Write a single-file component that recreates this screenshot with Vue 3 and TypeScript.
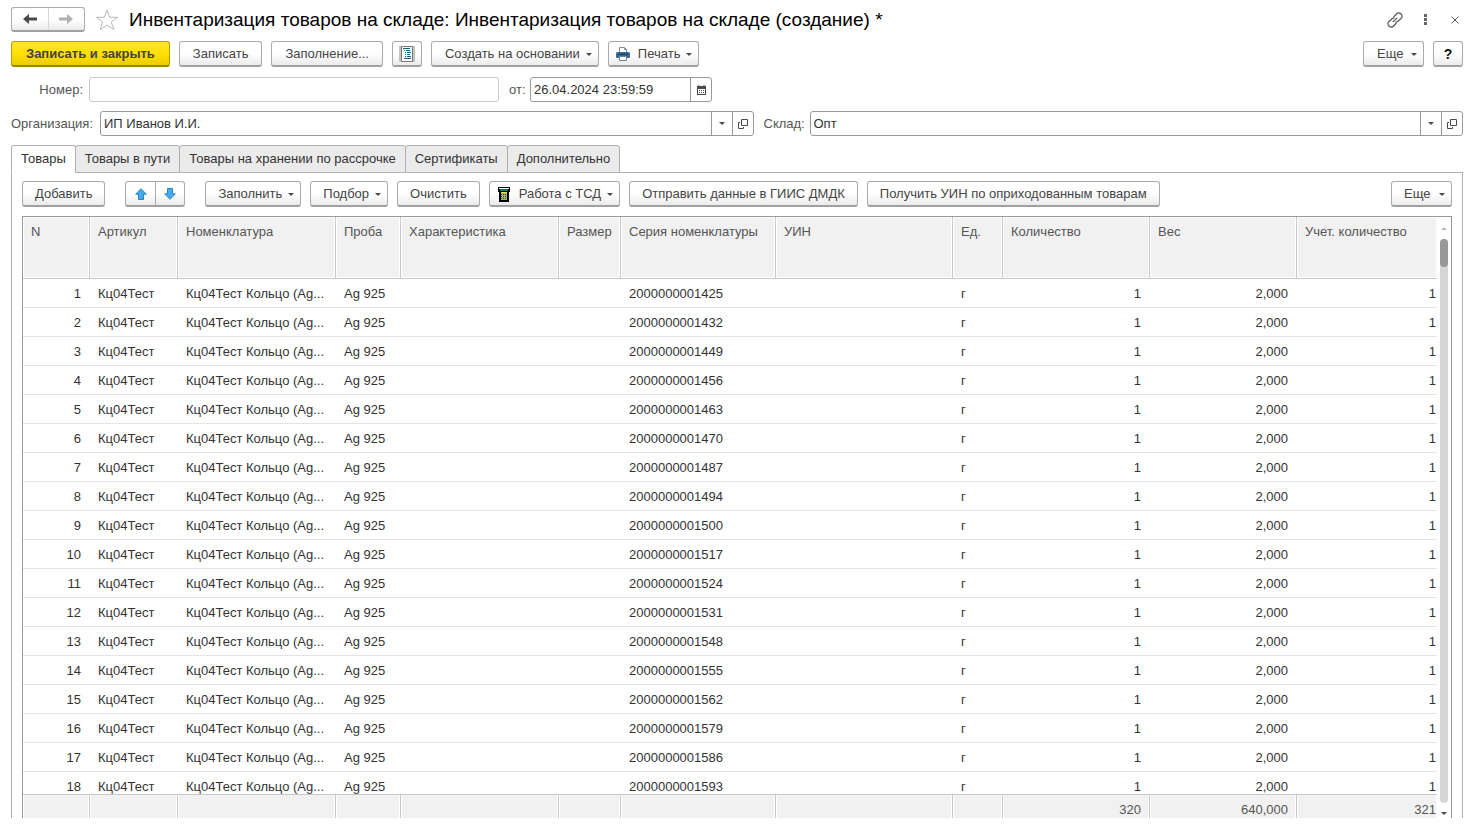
<script setup lang="ts">
import { ref } from 'vue'

interface Column {
  key: string
  title: string
  width: number | null
  numeric?: boolean
  total?: string
}

const columns: Column[] = [
  { key: 'n', title: 'N', width: 67, numeric: true },
  { key: 'article', title: 'Артикул', width: 88 },
  { key: 'item', title: 'Номенклатура', width: 158 },
  { key: 'fineness', title: 'Проба', width: 65 },
  { key: 'feature', title: 'Характеристика', width: 158 },
  { key: 'size', title: 'Размер', width: 62 },
  { key: 'series', title: 'Серия номенклатуры', width: 155 },
  { key: 'uin', title: 'УИН', width: 177 },
  { key: 'unit', title: 'Ед.', width: 50 },
  { key: 'qty', title: 'Количество', width: 147, numeric: true, total: '320' },
  { key: 'weight', title: 'Вес', width: 147, numeric: true, total: '640,000' },
  { key: 'accQty', title: 'Учет. количество', width: null, numeric: true, total: '321' },
]

const seriesEndings = [
  '1425', '1432', '1449', '1456', '1463', '1470', '1487', '1494', '1500',
  '1517', '1524', '1531', '1548', '1555', '1562', '1579', '1586', '1593',
]

const rows: Record<string, string>[] = seriesEndings.map((ending, i) => ({
  n: String(i + 1),
  article: 'Кц04Тест',
  item: 'Кц04Тест Кольцо (Ag...',
  fineness: 'Ag 925',
  series: '200000000' + ending,
  unit: 'г',
  qty: '1',
  weight: '2,000',
  accQty: '1',
}))

const tabs = ['Товары', 'Товары в пути', 'Товары на хранении по рассрочке', 'Сертификаты', 'Дополнительно']
const activeTab = ref(0)
const docNumber = ref('')
const docDate = ref('26.04.2024 23:59:59')
const organization = ref('ИП Иванов И.И.')
const warehouse = ref('Опт')
</script>

<template>
  <main class="form">
    <header class="title-row">
      <div class="pair nav">
        <button type="button" aria-label="Назад">
          <svg width="14" height="10" viewBox="0 0 14 10"><path d="M6 0 0 5l6 5V6.500h8v-3H6z" fill="#4a4a4a" /></svg>
        </button>
        <button type="button" aria-label="Вперед">
          <svg width="14" height="10" viewBox="0 0 14 10"><path d="M8 0l6 5-6 5V6.500H0v-3h8z" fill="#b0b0b0" /></svg>
        </button>
      </div>
      <button type="button" class="plain star" aria-label="В избранное">
        <svg width="24" height="22" viewBox="0 0 24 22"><path d="M12 1.200l2.700 7.100h7.900l-6.300 4.700 2.500 7.700-6.800-4.700-6.800 4.700 2.500-7.700L1.400 8.300h7.900z" fill="#fff" stroke="#b4bac0" /></svg>
      </button>
      <h1>Инвентаризация товаров на складе: Инвентаризация товаров на складе (создание) *</h1>
      <div class="window-tools">
        <button type="button" class="plain" aria-label="Получить ссылку">
          <svg width="16" height="16" viewBox="0 0 16 16" fill="none" stroke="#555" stroke-width="1.200"><path d="M6.500 5l3-3a2.900 2.900 0 0 1 4.500 0 2.900 2.900 0 0 1 0 4.500L11 9.300a2.600 2.600 0 0 1-2.500.500M9.500 11l-3 3A2.900 2.900 0 0 1 2 14a2.900 2.900 0 0 1 0-4.500L5 6.700a2.600 2.600 0 0 1 2.500-.500M5.800 10.200l4.400-4.400" /></svg>
        </button>
        <button type="button" class="plain" aria-label="Меню">
          <svg width="3" height="11" viewBox="0 0 3 11" fill="#666"><path d="M0 0h3v3H0zM0 4h3v3H0zM0 8h3v3H0z" /></svg>
        </button>
        <button type="button" class="plain" aria-label="Закрыть">
          <svg width="8" height="8" viewBox="0 0 8 8"><path d="M.500.500l7 7M7.500.500l-7 7" stroke="#555" /></svg>
        </button>
      </div>
    </header>

    <div class="bar commands">
      <button type="button" class="btn primary">Записать и закрыть</button>
      <button type="button" class="btn">Записать</button>
      <button type="button" class="btn">Заполнение...</button>
      <button type="button" class="btn square" aria-label="Отчет">
        <svg width="16" height="16" viewBox="0 0 16 16">
          <path d="M0 0h16v16H0z" fill="#c4c4c4" /><path d="M2.500.500h11v15h-11z" fill="#fff" stroke="#777" />
          <path d="M4 2.500h7M5 4.500h1M7 4.500h4M6 6.500h1M8 6.500h4M6 8.500h1M8 8.500h3M6 10.500h1M8 10.500h4M5 12.500h7" stroke="#17618a" />
        </svg>
      </button>
      <button type="button" class="btn menu">Создать на основании<i class="caret"></i></button>
      <button type="button" class="btn menu with-icon">
        <svg width="14" height="14" viewBox="0 0 14 14">
          <path d="M3.500 5V.500h5l2 2V5" fill="#fff" stroke="#7890a4" /><path d="M8.500.500v2h2" fill="none" stroke="#7890a4" />
          <rect y="5" width="14" height="6" rx="1.500" fill="#37678f" /><path d="M2 7.500h10" stroke="#173f61" />
          <path d="M3.500 9.500h7v4h-7z" fill="#fff" stroke="#6885a0" />
        </svg>
        Печать<i class="caret"></i>
      </button>
      <button type="button" class="btn menu push">Еще<i class="caret"></i></button>
      <button type="button" class="btn square help">?</button>
    </div>

    <div class="fields">
      <label class="name-label" for="doc-number">Номер:</label>
      <div class="box number"><input id="doc-number" v-model="docNumber" type="text" /></div>
      <label class="from-label" for="doc-date">от:</label>
      <div class="box date">
        <input id="doc-date" v-model="docDate" type="text" />
        <button type="button" class="cell" aria-label="Выбрать дату">
          <svg width="9" height="10" viewBox="0 0 9 10"><path d="M0 1h9v9H0z" fill="#4a4a4a" /><path d="M1 4h7v5H1z" fill="#fff" /><path d="M2 5.500h1M4 5.500h1M6 5.500h1M2 7.500h1M4 7.500h1M6 7.500h1M2 0v2M7 0v2" stroke="#4a4a4a" /></svg>
        </button>
      </div>
    </div>

    <div class="fields refs">
      <label class="org-label" for="organization">Организация:</label>
      <div class="box grow">
        <select id="organization" v-model="organization"><option>ИП Иванов И.И.</option></select>
        <span class="cell arrow"><i class="caret"></i></span>
        <button type="button" class="cell" aria-label="Открыть организацию">
          <svg width="10" height="10" viewBox="0 0 10 10" fill="none" stroke="#4a4a4a"><path d="M3.500.500h6v6h-6zM2 3.500H.500v6h5V8" /></svg>
        </button>
      </div>
      <label class="store-label" for="warehouse">Склад:</label>
      <div class="box grow">
        <select id="warehouse" v-model="warehouse"><option>Опт</option></select>
        <span class="cell arrow"><i class="caret"></i></span>
        <button type="button" class="cell" aria-label="Открыть склад">
          <svg width="10" height="10" viewBox="0 0 10 10" fill="none" stroke="#4a4a4a"><path d="M3.500.500h6v6h-6zM2 3.500H.500v6h5V8" /></svg>
        </button>
      </div>
    </div>

    <div class="tabs" role="tablist">
      <button
        v-for="(tab, i) in tabs"
        :key="tab"
        type="button"
        role="tab"
        class="tab"
        :class="{ active: i === activeTab }"
        :aria-selected="i === activeTab"
        @click="activeTab = i"
      >{{ tab }}</button>
    </div>

    <section class="panel">
      <div class="bar tools">
        <button type="button" class="btn">Добавить</button>
        <div class="pair move">
          <button type="button" aria-label="Переместить вверх">
            <svg width="12" height="12" viewBox="0 0 12 12"><path d="M6 .700l5.300 5.500H8.500v5.300h-5V6.200H.700z" fill="#45aeea" stroke="#2b84bb" /></svg>
          </button>
          <button type="button" aria-label="Переместить вниз">
            <svg width="12" height="12" viewBox="0 0 12 12"><path d="M6 11.300l5.300-5.500H8.500V.500h-5v5.300H.700z" fill="#45aeea" stroke="#2b84bb" /></svg>
          </button>
        </div>
        <button type="button" class="btn menu">Заполнить<i class="caret"></i></button>
        <button type="button" class="btn menu">Подбор<i class="caret"></i></button>
        <button type="button" class="btn">Очистить</button>
        <button type="button" class="btn menu with-icon">
          <svg width="14" height="15" viewBox="0 0 14 15">
            <path d="M1 0h12v5h-1v10H2V5H1z" fill="#000" /><path d="M2 1h10v1H2z" fill="#fff" /><path d="M3 2h8v2H3z" fill="#08735f" />
            <path d="M4 5h6v1H4z" fill="#e6df2c" /><path d="M4 6h6v7H4z" fill="#a7b47c" />
            <path d="M4 7.500h6M4 9.500h6M4 11.500h6" stroke="#39432a" stroke-dasharray="1 1" />
          </svg>
          Работа с ТСД<i class="caret"></i>
        </button>
        <button type="button" class="btn">Отправить данные в ГИИС ДМДК</button>
        <button type="button" class="btn">Получить УИН по оприходованным товарам</button>
        <button type="button" class="btn menu push">Еще<i class="caret"></i></button>
      </div>

      <div class="grid">
        <div class="viewport">
          <table>
            <colgroup>
              <col v-for="c in columns" :key="c.key" :style="c.width ? { width: c.width + 'px' } : {}" />
            </colgroup>
            <thead>
              <tr><th v-for="c in columns" :key="c.key" scope="col">{{ c.title }}</th></tr>
            </thead>
            <tbody>
              <tr v-for="row in rows" :key="row.n">
                <td v-for="c in columns" :key="c.key" :class="{ num: c.numeric }">{{ row[c.key] }}</td>
              </tr>
            </tbody>
            <tfoot>
              <tr><td v-for="c in columns" :key="c.key" :class="{ num: c.numeric }">{{ c.total }}</td></tr>
            </tfoot>
          </table>
        </div>
        <div class="scrollbar" aria-hidden="true">
          <i class="caret up"></i>
          <div class="track"><div class="thumb"></div></div>
          <i class="caret"></i>
        </div>
      </div>
    </section>
  </main>
</template>

<style>
body {
  margin: 0;
  background: #fff;
}
</style>

<style scoped>
.form,
.form * {
  box-sizing: border-box;
}

.form {
  display: flex;
  flex-direction: column;
  height: 100vh;
  padding: 7px 8px 9px 11px;
  overflow: hidden;
  font: 13px/16px "Liberation Sans", Arial, sans-serif;
  color: #333;
}

button,
input,
select {
  margin: 0;
  font: inherit;
  color: inherit;
}

button {
  white-space: nowrap;
}

svg {
  display: block;
  flex: none;
}

.title-row {
  display: flex;
  align-items: center;
  height: 25px;
}

h1 {
  margin: 0 0 0 10px;
  font-size: 19px;
  line-height: 24px;
  font-weight: 400;
  color: #000;
  white-space: nowrap;
}

.plain {
  display: flex;
  justify-content: center;
  padding: 0;
  border: 0;
  background: none;
}

.star {
  margin-left: 10px;
}

.window-tools {
  display: flex;
  align-items: center;
  gap: 14px;
  margin-left: auto;
}

.window-tools .plain {
  width: 16px;
}

.pair,
.btn {
  border: 1px solid #ababab;
  border-bottom: 2px solid #a0a0a0;
  border-radius: 3px;
  background: linear-gradient(#fff 50%, #ebebeb);
}

.pair {
  display: flex;
}

.pair button {
  display: flex;
  flex: 1;
  align-items: center;
  justify-content: center;
  padding: 0;
  border: 0;
  background: none;
}

.pair button + button {
  border-left: 1px solid #ababab;
}

.nav {
  width: 74px;
  height: 25px;
}

.nav button + button {
  border-left-color: #d8d8d8;
}

.move {
  width: 60px;
  height: 26px;
  margin: 0 11px;
}

.bar {
  display: flex;
  gap: 9px;
}

.commands {
  margin: 9px 0 10px;
}

.btn {
  display: flex;
  align-items: center;
  height: 26px;
  padding: 1px 13px 0;
  color: #444;
}

.tools .btn {
  padding-right: 12px;
  padding-left: 12px;
}

.btn.primary {
  padding-right: 14px;
  padding-left: 14px;
  border-color: #b59f00;
  border-bottom-color: #988600;
  background: linear-gradient(#ffe633, #ffe000 50%, #eccd00);
  font-weight: 700;
}

.bar .btn.menu {
  padding-right: 6px;
}

.btn.menu .caret {
  margin-left: 6px;
}

.bar .btn.with-icon {
  gap: 8px;
  padding-left: 7px;
}

.btn.with-icon .caret {
  margin-left: -2px;
}

.btn.square {
  justify-content: center;
  width: 30px;
  padding: 0;
}

.btn.help {
  font-size: 14px;
  font-weight: 700;
  color: #111;
}

.push {
  min-width: 61px;
  margin-left: auto;
}

.btn.push .caret {
  margin-left: auto;
}

.caret {
  flex: none;
  border: 3px solid transparent;
  border-top-color: #4a4a4a;
  border-bottom: 0;
}

.caret.up {
  border-top: 0;
  border-bottom: 3px solid #bbb;
}

.fields {
  display: flex;
  align-items: center;
}

.fields label {
  flex: none;
  color: #555;
}

.refs {
  margin: 9px 0;
}

.name-label {
  width: 78px;
  padding-right: 6px;
  text-align: right;
}

.from-label {
  width: 31px;
  padding-left: 10px;
}

.org-label {
  width: 89px;
}

.store-label {
  width: 56px;
  padding-left: 10px;
}

.box {
  display: flex;
  height: 25px;
  border: 1px solid #999;
  border-radius: 3px;
  background: #fff;
}

.box input,
.box select {
  flex: 1;
  min-width: 0;
  padding: 0 3px;
  border: 0;
  outline: 0;
  background: none;
  appearance: none;
}

.number {
  width: 410px;
  border-color: #ccc;
}

.date {
  width: 182px;
}

.grow {
  flex: 1;
}

.cell {
  display: flex;
  align-items: center;
  justify-content: center;
  width: 21px;
  padding: 0;
  border: 0;
  border-left: 1px solid #999;
  background: none;
}

.arrow {
  pointer-events: none;
}

.tabs {
  display: flex;
  position: relative;
  z-index: 1;
}

.tab {
  height: 28px;
  margin: 0 0 -1px -1px;
  padding: 0 9px;
  border: 1px solid #b0b0b0;
  border-radius: 3px 3px 0 0;
  background: #ebebeb;
}

.tab:first-child {
  margin-left: 0;
}

.tab.active {
  border-bottom-color: #fff;
  background: #fff;
}

.panel {
  display: flex;
  flex: 1;
  flex-direction: column;
  gap: 9px;
  min-height: 0;
  padding: 8px 10px 0;
  border: 1px solid #b0b0b0;
  border-bottom: 0;
}

.grid {
  display: flex;
  flex: 1;
  min-height: 0;
  border: 1px solid #999;
  border-bottom: 0;
}

.viewport {
  flex: 1;
  min-width: 0;
  overflow: hidden;
}

table {
  width: 100%;
  border-spacing: 0;
  table-layout: fixed;
}

th,
td {
  overflow: hidden;
  padding: 0 8px;
  text-align: left;
  text-overflow: ellipsis;
  white-space: nowrap;
}

th {
  height: 62px;
  padding-top: 7px;
  border-right: 1px solid #c8c8c8;
  border-bottom: 1px solid #c8c8c8;
  background: #f1f1f1;
  box-shadow: inset 0 0 0 1px #fff;
  font-weight: 400;
  vertical-align: top;
  color: #555;
}

th:last-child,
tfoot td:last-child {
  border-right: 0;
}

tbody td {
  height: 29px;
  padding-top: 2px;
  border-bottom: 1px solid #e4e4e4;
}

tbody td.num {
  padding-right: 9px;
}

td.num {
  text-align: right;
}

tfoot td {
  position: sticky;
  bottom: 0;
  height: 24px;
  padding-top: 6px;
  border-top: 1px solid #c8c8c8;
  border-right: 1px solid #c8c8c8;
  background: #f1f1f1;
  box-shadow: inset 1px 0 #fff, inset -1px 0 #fff;
  color: #555;
}

tbody td.num:last-child,
tfoot td.num:last-child {
  padding-right: 1px;
}

.scrollbar {
  display: flex;
  flex-direction: column;
  align-items: center;
  gap: 9px;
  width: 14px;
  padding: 10px 0 3px;
}

.track {
  flex: 1;
  width: 8px;
  border-radius: 4px;
  background: #d6d6d6;
}

.thumb {
  height: 28px;
  border-radius: 4px;
  background: #999;
}
</style>
